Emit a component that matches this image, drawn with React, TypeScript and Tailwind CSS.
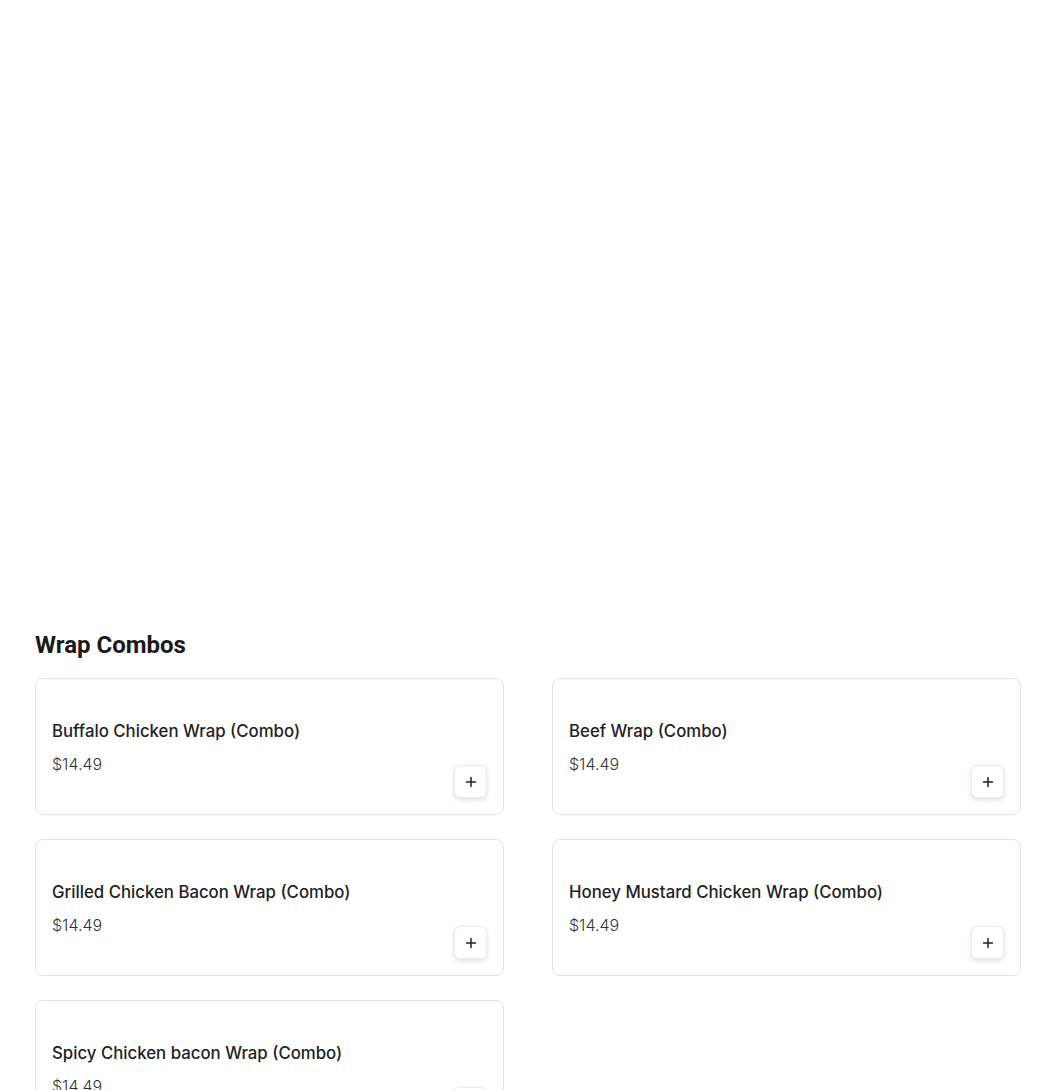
import React from "react";

const items = [
  "Buffalo Chicken Wrap (Combo)",
  "Beef Wrap (Combo)",
  "Grilled Chicken Bacon Wrap (Combo)",
  "Honey Mustard Chicken Wrap (Combo)",
  "Spicy Chicken bacon Wrap (Combo)",
];

function PlusIcon() {
  return (
    <svg width="12" height="12" viewBox="0 0 12 12" fill="none">
      <path d="M6 1.5v9M1.5 6h9" stroke="#222" strokeWidth="1.5" strokeLinecap="round" />
    </svg>
  );
}

export default function App() {
  return (
    <div className="w-[1050px] h-[1090px] overflow-hidden bg-white">
      <div className="h-[629px]" />
      <div className="pl-[35px]">
        <h2
          className="text-[24px] leading-[32px] font-bold text-[#1a1a1a]"
          style={{ fontFamily: "Roboto, sans-serif" }}
        >
          Wrap Combos
        </h2>
        <div className="mt-[17px] grid w-[986px] grid-cols-2 gap-x-12 gap-y-6">
          {items.map((name) => (
            <div
              key={name}
              className="flex items-end justify-between rounded-lg border border-[#e3e3e3] bg-white px-4 pb-4 pt-[40px]"
            >
              <div className="flex flex-col pb-[22px]" style={{ fontFamily: "Inter, sans-serif" }}>
                <div className="text-[16.8px] leading-[24px] font-medium text-[#222]">{name}</div>
                <div className="mt-[9px] text-[16px] leading-[24px] font-light text-[#333]">$14.49</div>
              </div>
              <button className="flex h-[33px] w-[33px] items-center justify-center rounded-md border border-[#ececec] bg-white shadow-[0_2px_5px_rgba(0,0,0,0.12)]">
                <PlusIcon />
              </button>
            </div>
          ))}
        </div>
      </div>
    </div>
  );
}
